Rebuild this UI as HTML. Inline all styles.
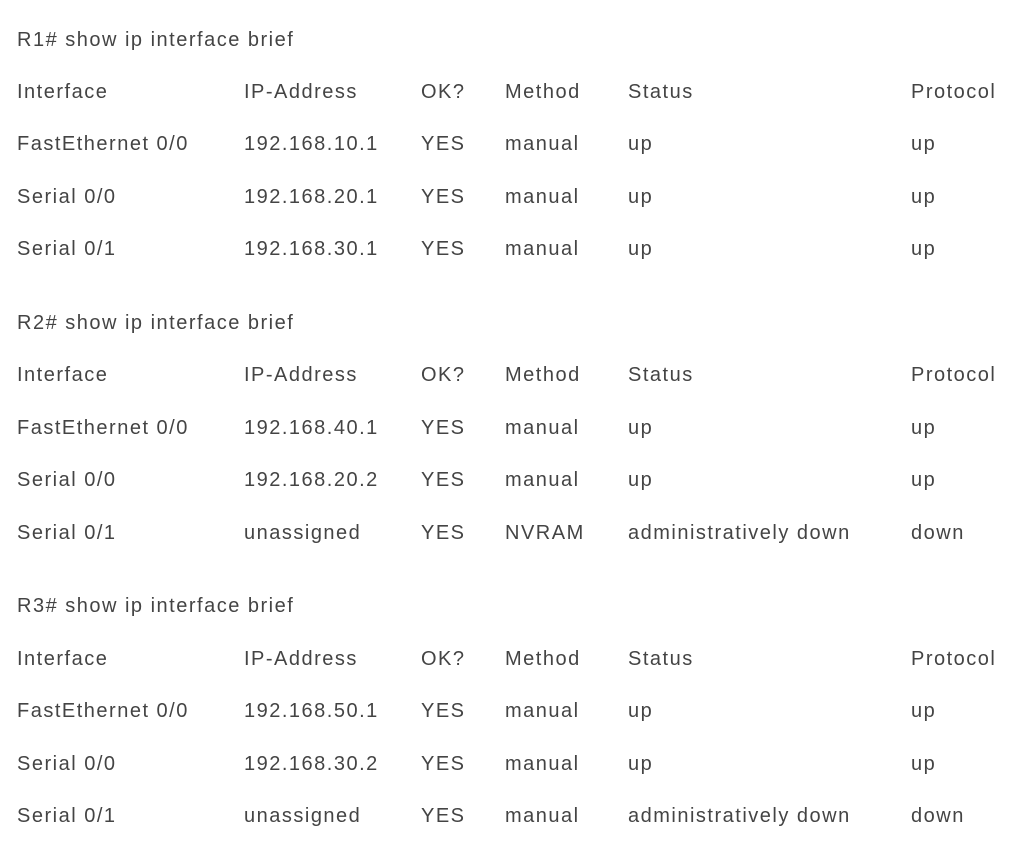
<!DOCTYPE html>
<html><head><meta charset="utf-8"><style>
body{margin:0;width:1030px;height:856px;background:#fff;position:relative;overflow:hidden;font-family:"Liberation Sans","Noto Sans CJK JP",sans-serif;color:#444;font-size:20px;letter-spacing:1.5px}
.r{position:absolute;left:0;height:24px;line-height:24px;white-space:nowrap;width:1030px}
.r span{position:absolute;top:0}
.a{left:17px}.b{left:244px}.c{left:421px}.d{left:505px}.e{left:628px}.f{left:911px}
</style></head><body>
<div class="r" style="top:28px"><span class="a">R1# show ip interface brief</span></div>
<div class="r" style="top:80px"><span class="a">Interface</span><span class="b">IP-Address</span><span class="c">OK?</span><span class="d">Method</span><span class="e">Status</span><span class="f">Protocol</span></div>
<div class="r" style="top:132px"><span class="a">FastEthernet 0/0</span><span class="b">192.168.10.1</span><span class="c">YES</span><span class="d">manual</span><span class="e">up</span><span class="f">up</span></div>
<div class="r" style="top:185px"><span class="a">Serial 0/0</span><span class="b">192.168.20.1</span><span class="c">YES</span><span class="d">manual</span><span class="e">up</span><span class="f">up</span></div>
<div class="r" style="top:237px"><span class="a">Serial 0/1</span><span class="b">192.168.30.1</span><span class="c">YES</span><span class="d">manual</span><span class="e">up</span><span class="f">up</span></div>

<div class="r" style="top:311px"><span class="a">R2# show ip interface brief</span></div>
<div class="r" style="top:363px"><span class="a">Interface</span><span class="b">IP-Address</span><span class="c">OK?</span><span class="d">Method</span><span class="e">Status</span><span class="f">Protocol</span></div>
<div class="r" style="top:416px"><span class="a">FastEthernet 0/0</span><span class="b">192.168.40.1</span><span class="c">YES</span><span class="d">manual</span><span class="e">up</span><span class="f">up</span></div>
<div class="r" style="top:468px"><span class="a">Serial 0/0</span><span class="b">192.168.20.2</span><span class="c">YES</span><span class="d">manual</span><span class="e">up</span><span class="f">up</span></div>
<div class="r" style="top:521px"><span class="a">Serial 0/1</span><span class="b">unassigned</span><span class="c">YES</span><span class="d">NVRAM</span><span class="e">administratively down</span><span class="f">down</span></div>

<div class="r" style="top:594px"><span class="a">R3# show ip interface brief</span></div>
<div class="r" style="top:647px"><span class="a">Interface</span><span class="b">IP-Address</span><span class="c">OK?</span><span class="d">Method</span><span class="e">Status</span><span class="f">Protocol</span></div>
<div class="r" style="top:699px"><span class="a">FastEthernet 0/0</span><span class="b">192.168.50.1</span><span class="c">YES</span><span class="d">manual</span><span class="e">up</span><span class="f">up</span></div>
<div class="r" style="top:752px"><span class="a">Serial 0/0</span><span class="b">192.168.30.2</span><span class="c">YES</span><span class="d">manual</span><span class="e">up</span><span class="f">up</span></div>
<div class="r" style="top:804px"><span class="a">Serial 0/1</span><span class="b">unassigned</span><span class="c">YES</span><span class="d">manual</span><span class="e">administratively down</span><span class="f">down</span></div>
</body></html>
